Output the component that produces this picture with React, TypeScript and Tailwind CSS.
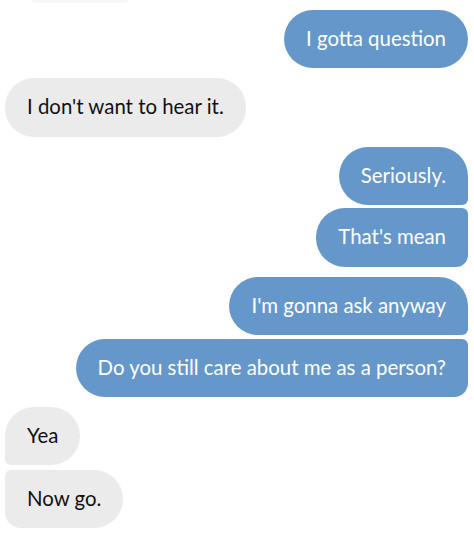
import React from "react";

const font = { fontFamily: "Lato, 'Open Sans', sans-serif" };

export default function App() {
  return (
    <div className="w-[474px] h-[544px] bg-white flex flex-col pl-[5px] pr-[6px] text-[20.4px] leading-[24px]" style={font}>
      <div className="ml-[27px] w-[96px] h-[3px] bg-[#f7f7f7] rounded-b-[2px]" />
      <div className="self-end mt-[7px] h-[58px] px-[22px] pb-[3px] flex items-center rounded-[29px] bg-[#6697cb] text-white">
        I gotta question
      </div>
      <div className="self-start mt-[10px] h-[59px] px-[22px] pb-[3px] flex items-center rounded-[29px] bg-[#ebebeb] text-[#111]">
        I don't want to hear it.
      </div>
      <div className="self-end mt-[10px] h-[58px] px-[22px] pb-[3px] flex items-center rounded-[29px] rounded-br-[6px] bg-[#6697cb] text-white">
        Seriously.
      </div>
      <div className="self-end mt-[3px] h-[59px] px-[22px] pb-[3px] flex items-center rounded-[29px] rounded-tr-[6px] rounded-br-[12px] bg-[#6697cb] text-white">
        That's mean
      </div>
      <div className="self-end mt-[10px] h-[58px] px-[22px] pb-[3px] flex items-center rounded-[29px] rounded-br-[6px] bg-[#6697cb] text-white">
        I'm gonna ask anyway
      </div>
      <div className="self-end mt-[4px] h-[58px] px-[22px] pb-[3px] flex items-center rounded-[29px] rounded-tr-[6px] rounded-br-[14px] bg-[#6697cb] text-white">
        Do you still care about me as a person?
      </div>
      <div className="self-start mt-[10px] h-[58px] px-[22px] pb-[3px] flex items-center rounded-[29px] rounded-bl-[6px] bg-[#ebebeb] text-[#111]">
        Yea
      </div>
      <div className="self-start mt-[5px] h-[58px] px-[22px] pb-[3px] flex items-center rounded-[29px] rounded-tl-[6px] rounded-bl-[16px] bg-[#ebebeb] text-[#111]">
        Now go.
      </div>
    </div>
  );
}
